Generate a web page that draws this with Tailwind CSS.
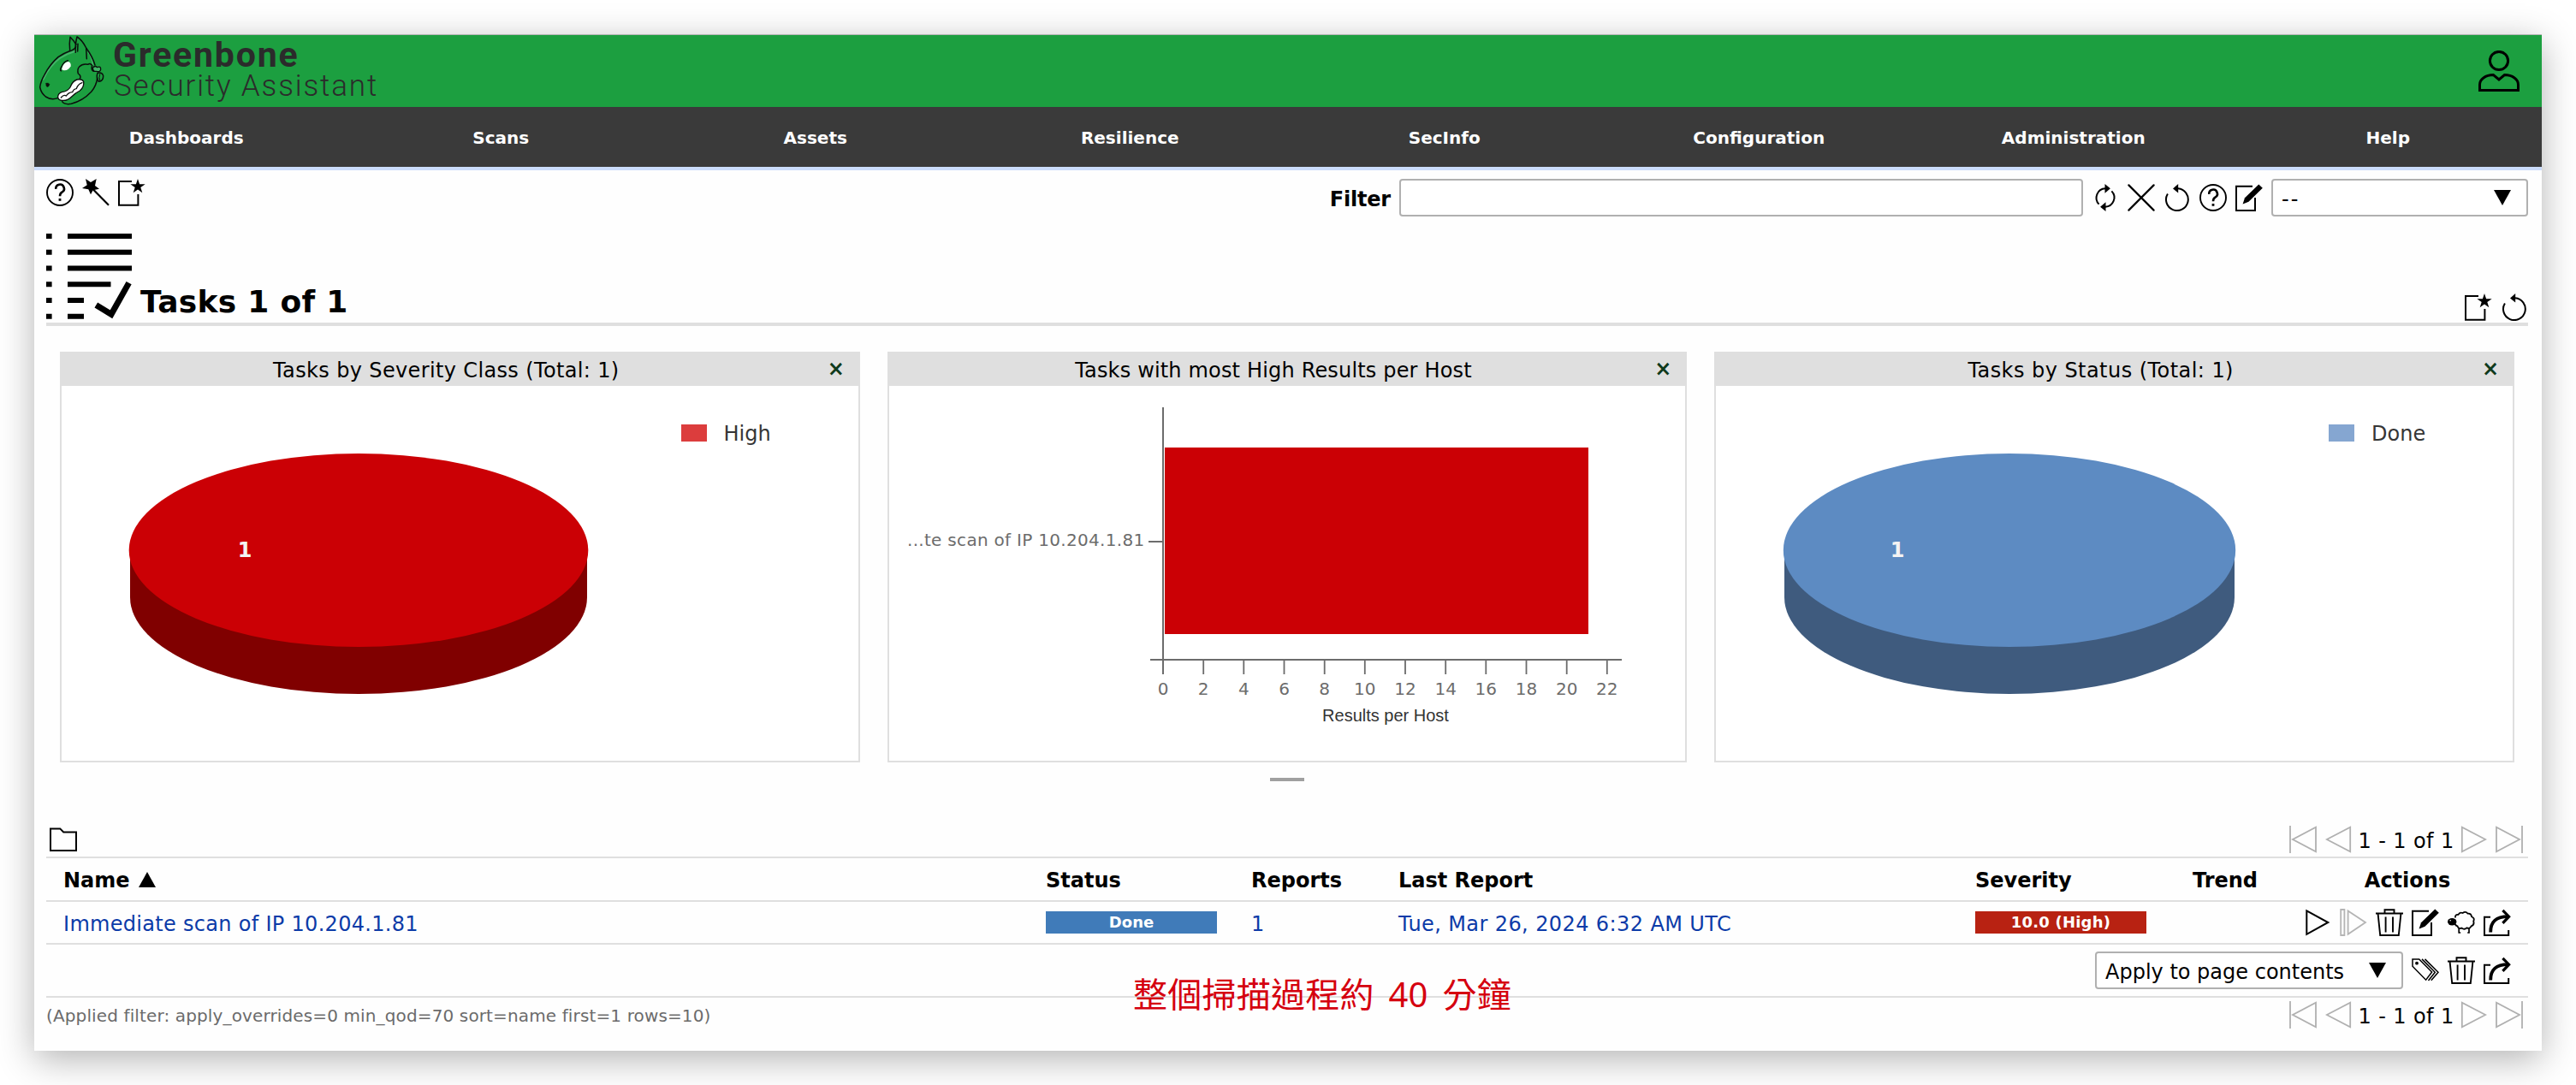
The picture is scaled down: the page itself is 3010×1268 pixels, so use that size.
<!DOCTYPE html>
<html lang="en">
<head>
<meta charset="utf-8">
<title>Greenbone Security Assistant</title>
<script src="https://cdn.jsdelivr.net/npm/@tailwindcss/browser@4"></script>
</head>
<body class="w-[3010px] h-[1268px] overflow-hidden bg-white pt-10 pl-10 font-['Verdana','DejaVu_Sans',sans-serif] text-2xl text-black">

<!-- Icon sprite -->
<svg class="hidden">
  <defs>
    <symbol id="help" viewBox="0 0 32 32"><circle cx="16" cy="16" r="15" fill="none" stroke="currentColor" stroke-width="1.9"/><path d="M11.3 11.8A4.8 4.8 0 1 1 18.4 15.6Q16 17 16 20.3" fill="none" stroke="currentColor" stroke-width="2.6"/><rect x="14.6" y="23" width="2.8" height="2.8"/></symbol>
    <symbol id="wand" viewBox="0 0 32 32"><path d="M4 0L10 4L16.7 0L15 8L20 11.7L12.7 13.3L10 18.3L7.3 12.3L0 11L5.7 7.3Z"/><path d="M12 11.5L31 30.7" stroke="currentColor" stroke-width="2.2"/></symbol>
    <symbol id="new" viewBox="0 0 32 32"><path d="M16 2.9H1V30.7H23.4V18" fill="none" stroke="currentColor" stroke-width="2"/><path d="M23 0L25.1 6.2H31.7L26.3 10.1L28.3 16.3L23 12.5L17.7 16.3L19.7 10.1L14.4 6.2H20.9Z"/></symbol>
    <symbol id="refresh" viewBox="0 0 32 32"><path d="M8.6 23.6A10.8 10.8 0 0 1 16 5.3M23.4 8.4A10.8 10.8 0 0 1 16 26.7" fill="none" stroke="currentColor" stroke-width="2"/><path d="M15.5 0L21.9 5.3L15.5 10.7ZM16.5 21.3L10.1 26.7L16.5 32Z"/></symbol>
    <symbol id="close" viewBox="0 0 32 32"><path d="M1.4 1.4L30.6 30.6M30.6 1.4L1.4 30.6" stroke="currentColor" stroke-width="2.2" stroke-linecap="round"/></symbol>
    <symbol id="reset" viewBox="0 0 32 32"><path d="M4.9 11.4A12.9 12.9 0 1 0 17 5.3" fill="none" stroke="currentColor" stroke-width="2"/><path d="M11 5.4L17.2 0V10.4Z"/></symbol>
    <symbol id="edit" viewBox="0 0 32 32"><path d="M20 2.8H1V31H23V16" fill="none" stroke="currentColor" stroke-width="2"/><path d="M8.6 23.4L11 16.3L27.3 .4L31.8 4.7L15.5 20.7Z"/></symbol>
    <symbol id="trash" viewBox="0 0 32 32"><path d="M0 5.5H32M10.5 5V1.2H21.5V5M2.6 6L5.2 31H26.8L29.4 6M11.6 9.5V27.5M20 9.5V27.5" fill="none" stroke="currentColor" stroke-width="1.9"/></symbol>
    <symbol id="play" viewBox="0 0 32 32"><path d="M3.3 2.4L28.3 16L3.3 29.8Z" fill="none" stroke="currentColor" stroke-width="2"/></symbol>
    <symbol id="resume" viewBox="0 0 32 32"><path d="M1.2 1H5.4V31H1.2ZM9.6 2.4L30 16L9.6 29.8Z" fill="none" stroke="currentColor" stroke-width="1.8"/></symbol>
    <symbol id="sheep" viewBox="0 0 32 32"><path d="M9 10.5Q8.5 6.5 12.5 6.8Q14 3.6 17.6 5Q21 2.6 23.5 5.6Q27.5 5.2 28 9.2Q32 11 30.2 14.6Q31.6 19 27.6 20.4Q26 24 22.4 22.4Q19.5 25 16.6 22.6Q12.6 24 11.6 20.4Q9 19.8 9 17.4" fill="none" stroke="currentColor" stroke-width="1.8"/><ellipse cx="5.2" cy="15.2" rx="5.2" ry="4.2"/><circle cx="3.2" cy="13.8" r=".8" fill="#fff"/><path d="M13.2 22.5V28H15.2M25 22.5V28H23.2" fill="none" stroke="currentColor" stroke-width="1.7"/></symbol>
    <symbol id="export" viewBox="0 0 32 32"><path d="M8 9.7H1V31H29.2V25" fill="none" stroke="currentColor" stroke-width="2"/><path d="M8.2 27.5C8 15 15 9.2 28.5 9.2" fill="none" stroke="currentColor" stroke-width="3.8"/><path d="M22.4 1.8L29.6 9.2L22.4 16.8" fill="none" stroke="currentColor" stroke-width="3.2"/></symbol>
    <symbol id="tags" viewBox="0 0 32 32"><path d="M1 2.9H8.7L23.6 18L16.6 27.2L1 11.2ZM12 2.9L27.3 18.2L19.5 28M15.5 2.9L31 18.2L22.8 27.8" fill="none" stroke="currentColor" stroke-width="1.5"/><circle cx="6" cy="7.7" r="1.9"/></symbol>
    <symbol id="folder" viewBox="0 0 32 32"><path d="M1 2.4H12.2L16.2 6.4H31V28H1Z" fill="none" stroke="currentColor" stroke-width="2"/></symbol>
    <symbol id="first" viewBox="0 0 32 32"><path d="M1 0V32M31 1.8V30.2L4 16Z" fill="none" stroke="currentColor" stroke-width="1.8"/></symbol>
    <symbol id="prev" viewBox="0 0 32 32"><path d="M29.2 1.8V30.2L1.8 16Z" fill="none" stroke="currentColor" stroke-width="1.8"/></symbol>
    <symbol id="next" viewBox="0 0 32 32"><path d="M2.8 1.8V30.2L30.2 16Z" fill="none" stroke="currentColor" stroke-width="1.8"/></symbol>
    <symbol id="last" viewBox="0 0 32 32"><path d="M31 0V32M1 1.8V30.2L28 16Z" fill="none" stroke="currentColor" stroke-width="1.8"/></symbol>
  </defs>
</svg>

<main class="relative flex w-[2930px] h-[1188px] flex-col bg-[#fefefe] shadow-[0_10px_40px_rgba(0,0,0,0.3)]">
  <!-- Title bar -->
  <header class="flex h-[85px] shrink-0 items-center border-t border-[#b5b5b5] bg-[#1c9f40]">
    <svg class="h-[84px] w-[90px]" viewBox="0 9 270 252" fill="none" stroke="#0b0f0c" stroke-width="4.5" stroke-linejoin="round" stroke-linecap="round">
      <path d="M32 164Q54 116 90 90Q114 74 142 66" stroke="#45b56a" stroke-width="6"/>
      <path d="M190 70Q204 90 205 112" stroke="#45b56a" stroke-width="5"/>
      <path d="M146 50Q140 62 122 66Q104 72 84 86Q56 110 36 148Q22 172 20 192Q24 212 40 225Q60 238 82 230"/>
      <path d="M125 62Q122 40 126 16Q138 28 147 42"/>
      <path d="M145 70Q143 40 150 15Q168 26 182 54Q204 84 213 114"/>
      <path d="M153 40L152 66M182 56L184 92"/>
      <path d="M94 134Q88 132 98 116Q104 102 118 98"/>
      <path d="M97 126Q102 106 118 102Q130 104 128 118Q120 134 104 133Q96 132 97 126Z" fill="#fff" stroke="none"/>
      <path d="M41 178Q50 174 54 182Q52 190 45 191Q40 188 41 178Z" fill="#0b0f0c" stroke-width="1"/>
      <path d="M160 162Q166 152 154 144Q150 128 158 120Q170 108 188 112Q198 106 203 116Q198 130 208 136"/>
      <path d="M83 228Q82 214 96 209Q118 206 126 192Q134 170 150 165Q168 162 173 172Q176 190 160 204Q144 212 132 224Q116 240 98 238Q86 238 83 228Z" fill="#fff" stroke-width="4"/>
      <path d="M94 228Q104 216 112 222Q120 210 134 209Q138 198 148 197Q152 182 168 176" stroke-width="4"/>
      <path d="M98 242Q106 254 130 250Q170 240 200 208Q218 186 221 160"/>
      <path d="M205 124Q214 114 220 122Q234 116 233 130Q230 140 218 136Q206 138 205 124Z" fill="#45b56a" stroke-width="4"/>
      <path d="M222 142Q216 158 226 172Q242 170 242 152Q238 138 222 142Z" stroke-width="4.5"/>
      <path d="M230 146Q226 158 230 168" stroke-width="3"/>
    </svg>
    <div class="ml-[2px] flex flex-col pb-[3px] font-['Roboto',sans-serif] text-[#2b2b2b]">
      <span class="text-[41px] leading-[38px] font-bold tracking-[1.8px]">Greenbone</span>
      <span class="pl-px text-[35px] leading-[36px] font-light tracking-[1.85px]">Security Assistant</span>
    </div>
    <svg class="mr-[26px] ml-auto size-12" viewBox="0 0 48 48" fill="none" stroke="#000" stroke-width="3"><ellipse cx="24" cy="12" rx="10.6" ry="10.6"/><path d="M17.5 28.6L24 34L30.5 28.6C40 28.6 46.5 34 46.5 40V46.5H1.5V40C1.5 34 8 28.6 17.5 28.6Z"/></svg>
  </header>

  <!-- Main menu -->
  <nav class="h-[74px] shrink-0 overflow-hidden border-b-4 border-[#cbdcfc] bg-[#3a3a3a] text-xl font-bold text-white">
    <div class="-ml-[6px] grid h-[72px] w-[2940px] grid-cols-8 items-center text-center">
      <span>Dashboards</span><span>Scans</span><span>Assets</span><span>Resilience</span><span>SecInfo</span><span>Configuration</span><span>Administration</span><span>Help</span>
    </div>
  </nav>

  <div class="flex flex-col pt-2.5 pr-4 pl-3.5">
    <!-- Toolbar -->
    <div class="flex h-11 items-start justify-between">
      <div class="flex gap-2.5">
        <svg class="size-8"><use href="#help"/></svg>
        <svg class="size-8"><use href="#wand"/></svg>
        <svg class="size-8"><use href="#new"/></svg>
      </div>
      <div class="flex items-center gap-2.5">
        <span class="pt-1 font-bold tracking-[-0.2px]">Filter</span>
        <input class="h-11 w-[799px] rounded-[4px] border-2 border-[#b0b0b0] bg-white">
        <svg class="size-8"><use href="#refresh"/></svg>
        <svg class="size-8"><use href="#close"/></svg>
        <svg class="size-8"><use href="#reset"/></svg>
        <svg class="size-8"><use href="#help"/></svg>
        <svg class="size-8"><use href="#edit"/></svg>
        <div class="flex h-11 w-[300px] items-center justify-between rounded-[4px] border-2 border-[#b0b0b0] bg-white pr-[18px] pl-2.5">
          <span class="pt-[3px] tracking-[2px]">--</span>
          <svg class="h-[18px] w-5" viewBox="0 0 20 18"><path d="M0 0H20L10 18Z"/></svg>
        </div>
      </div>
    </div>

    <!-- Section title -->
    <div class="mt-5 flex h-[108px] items-end border-b-4 border-[#dfdfdf]">
      <svg class="mb-1 size-[100px]" viewBox="0 0 100 100"><path d="M0 0H6.6V6H0ZM0 18.8H6.6V24.8H0ZM0 37.6H6.6V43.6H0ZM0 56.3H6.6V62.3H0ZM0 75H6.6V81H0ZM0 93.8H6.6V99.8H0ZM25 0H100V6H25ZM25 18.8H100V24.8H25ZM25 37.6H100V43.6H25ZM25 56.3H75.5V62.3H25ZM25 75H44V81H25ZM25 93.8H44V99.8H25Z"/><path d="M58.3 83.6L76 94.3L96.6 57.6" fill="none" stroke="#000" stroke-width="7"/></svg>
      <h1 class="mb-[3px] ml-2.5 text-[36px] leading-[42px] font-bold tracking-[0.3px]">Tasks 1 of 1</h1>
      <div class="mb-[2px] ml-auto flex gap-2.5">
        <svg class="size-8"><use href="#new"/></svg>
        <svg class="size-8"><use href="#reset"/></svg>
      </div>
    </div>

    <!-- Dashboard -->
    <div class="mx-4 mt-[30px] grid h-[480px] grid-cols-3 gap-8">
      <section class="flex flex-col overflow-hidden border-2 border-t-0 border-[#dfdfdf] bg-white">
        <div class="flex h-10 shrink-0 items-center bg-[#dfdfdf] pt-1">
          <h2 class="flex-1 pl-1 text-center tracking-[0.36px]">Tasks by Severity Class (Total: 1)</h2>
          <span class="w-9 pb-1 font-bold text-[#0f3a1c]">×</span>
        </div>
        <svg class="h-[438px] w-[931px]" viewBox="72 451 931 438">
          <path d="M152 643V698A267 113 0 0 0 686 698V643Z" fill="#800000"/>
          <ellipse cx="419" cy="643" rx="268.3" ry="113" fill="#cb0005"/>
          <text x="286" y="651" font-size="24" font-weight="700" text-anchor="middle" fill="#f3f3f3">1</text>
          <rect x="796" y="496" width="30" height="20" fill="#dc3d3d"/>
          <text x="845.5" y="515" fill="#363636">High</text>
        </svg>
      </section>

      <section class="flex flex-col overflow-hidden border-2 border-t-0 border-[#dfdfdf] bg-white">
        <div class="flex h-10 shrink-0 items-center bg-[#dfdfdf] pt-1">
          <h2 class="flex-1 pl-1 text-center tracking-[0.17px]">Tasks with most High Results per Host</h2>
          <span class="w-9 pb-1 font-bold text-[#0f3a1c]">×</span>
        </div>
        <svg class="h-[438px] w-[931px]" viewBox="1039 451 931 438">
          <rect x="1361" y="523" width="495" height="218" fill="#cb0005"/>
          <g stroke="#6c6c6c" stroke-width="2" fill="none">
            <path d="M1359 476V788M1344 771H1895M1342 633H1359"/>
            <path d="M1406.2 771V788M1453.3 771V788M1500.5 771V788M1547.7 771V788M1594.8 771V788M1642 771V788M1689.2 771V788M1736.3 771V788M1783.5 771V788M1830.7 771V788M1877.8 771V788" stroke-width="1.8"/>
          </g>
          <g font-size="20" fill="#6c6c6c" text-anchor="middle">
            <text x="1359" y="812">0</text><text x="1406.2" y="812">2</text><text x="1453.3" y="812">4</text><text x="1500.5" y="812">6</text><text x="1547.7" y="812">8</text><text x="1594.8" y="812">10</text><text x="1642" y="812">12</text><text x="1689.2" y="812">14</text><text x="1736.3" y="812">16</text><text x="1783.5" y="812">18</text><text x="1830.7" y="812">20</text><text x="1877.8" y="812">22</text>
          </g>
          <text x="1337.5" y="638" font-size="20" fill="#6c6c6c" text-anchor="end" class="tracking-[0.3px]">...te scan of IP 10.204.1.81</text>
          <text x="1619" y="843" font-size="20" fill="#333" text-anchor="middle" class="font-['Liberation_Sans',sans-serif]">Results per Host</text>
        </svg>
      </section>

      <section class="flex flex-col overflow-hidden border-2 border-t-0 border-[#dfdfdf] bg-white">
        <div class="flex h-10 shrink-0 items-center bg-[#dfdfdf] pt-1">
          <h2 class="flex-1 pl-1 text-center tracking-[0.45px]">Tasks by Status (Total: 1)</h2>
          <span class="w-9 pb-1 font-bold text-[#0f3a1c]">×</span>
        </div>
        <svg class="h-[438px] w-[931px]" viewBox="2005 451 931 438">
          <path d="M2085 643V698A263 113 0 0 0 2611 698V643Z" fill="#3f5b7e"/>
          <ellipse cx="2348" cy="643" rx="264.2" ry="113" fill="#5d8bc2"/>
          <text x="2217" y="651" font-size="24" font-weight="700" text-anchor="middle" fill="#f3f3f3">1</text>
          <rect x="2721" y="496" width="30" height="20" fill="#85a6d1"/>
          <text x="2771" y="515" fill="#363636">Done</text>
        </svg>
      </section>
    </div>
    <div class="mt-[18px] h-1 w-10 self-center bg-[#a0a0a0]"></div>

    <!-- Task list -->
    <div class="mt-[52px] flex h-9 items-start justify-between pr-1.5 pl-1">
      <svg class="mt-px size-8"><use href="#folder"/></svg>
      <div class="flex text-[#b0b0b0]">
        <svg class="mr-2.5 size-8"><use href="#first"/></svg>
        <svg class="size-8"><use href="#prev"/></svg>
        <span class="w-[125px] pt-[2px] text-center tracking-[0.4px] text-black">1 - 1 of 1</span>
        <svg class="mr-2.5 size-8"><use href="#next"/></svg>
        <svg class="size-8"><use href="#last"/></svg>
      </div>
    </div>
    <div class="grid h-[51px] grid-cols-[1168px_240px_172px_674px_220px_144px_282px] items-center border-t-2 border-[#dfdfdf] pt-[3px] font-bold">
      <span class="flex items-center gap-2.5 pl-5">Name <svg class="mb-[2px] h-[18px] w-5" viewBox="0 0 20 18"><path d="M0 18H20L10 0Z"/></svg></span>
      <span>Status</span><span>Reports</span><span>Last Report</span><span>Severity</span><span class="text-center">Trend</span><span class="text-center">Actions</span>
    </div>
    <div class="grid h-[50px] grid-cols-[1168px_240px_172px_674px_220px_144px_282px] items-center border-t-2 border-[#dfdfdf] text-[#0c3ba8]">
      <span class="pt-[3px] pl-5 tracking-[0.3px]">Immediate scan of IP 10.204.1.81</span>
      <span class="w-[200px] bg-[#407bb9] text-center text-lg leading-[26px] font-bold text-white">Done</span>
      <span class="pt-[3px]">1</span>
      <span class="pt-[3px] tracking-[0.4px]">Tue, Mar 26, 2024 6:32 AM UTC</span>
      <span class="w-[200px] bg-[#b82212] text-center text-lg leading-[26px] font-bold tracking-[0.2px] text-white">10.0 (High)</span>
      <span></span>
      <span class="flex justify-center gap-2.5 text-black">
        <svg class="size-8"><use href="#play"/></svg>
        <svg class="size-8 text-[#b4b4b4]"><use href="#resume"/></svg>
        <svg class="size-8"><use href="#trash"/></svg>
        <svg class="size-8"><use href="#edit"/></svg>
        <svg class="size-8"><use href="#sheep"/></svg>
        <svg class="size-8"><use href="#export"/></svg>
      </span>
    </div>
    <div class="flex h-[62px] items-center justify-end gap-2.5 border-t-2 border-[#dfdfdf] pr-5">
      <div class="flex h-11 w-[360px] items-center justify-between rounded-[4px] border-2 border-[#b0b0b0] bg-white pr-[18px] pl-2.5">
        <span class="pt-[3px]">Apply to page contents</span>
        <svg class="h-[18px] w-5" viewBox="0 0 20 18"><path d="M0 0H20L10 18Z"/></svg>
      </div>
      <svg class="size-8"><use href="#tags"/></svg>
      <svg class="size-8"><use href="#trash"/></svg>
      <svg class="size-8"><use href="#export"/></svg>
    </div>
    <div class="flex items-start justify-between border-t-2 border-[#dfdfdf] pt-1 pr-1.5">
      <span class="pt-[3px] text-xl tracking-[0.13px] text-[#6b6b6b]">(Applied filter: apply_overrides=0 min_qod=70 sort=name first=1 rows=10)</span>
      <div class="flex text-[#b0b0b0]">
        <svg class="mr-2.5 size-8"><use href="#first"/></svg>
        <svg class="size-8"><use href="#prev"/></svg>
        <span class="w-[125px] pt-[2px] text-center tracking-[0.4px] text-black">1 - 1 of 1</span>
        <svg class="mr-2.5 size-8"><use href="#next"/></svg>
        <svg class="size-8"><use href="#last"/></svg>
      </div>
    </div>
  </div>

  <!-- Annotation over the table footer -->
  <p class="absolute top-[1090px] left-[1284px] font-['Noto_Sans_CJK_TC',sans-serif] text-[40px] leading-[60px] tracking-[0.25px] whitespace-nowrap text-[#d5000f] [word-spacing:7.5px]">整個掃描過程約 <span class="font-['Noto_Sans','Noto_Sans_CJK_TC',sans-serif]">40</span> 分鐘</p>
</main>
</body>
</html>
